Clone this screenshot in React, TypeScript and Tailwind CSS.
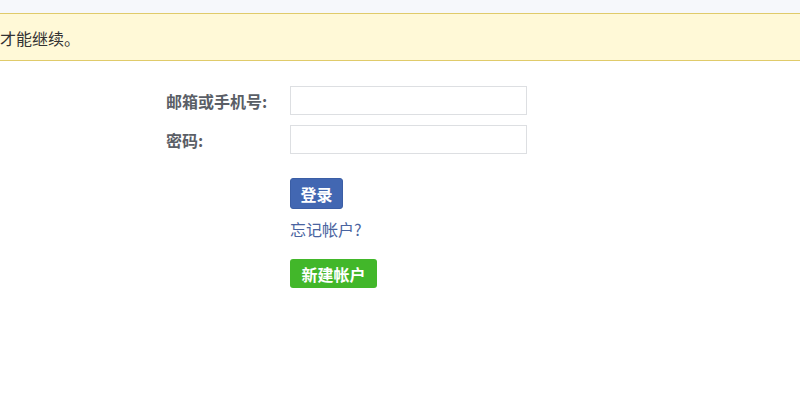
export default function App() {
  const font = { fontFamily: '"Noto Sans CJK SC", "Liberation Sans", sans-serif' }
  return (
    <div className="w-[800px] h-[401px] bg-white overflow-hidden" style={font}>
      {/* Top strip */}
      <div className="h-[13px] bg-[#f6f8fb]" />

      {/* Notice banner */}
      <div className="h-[48px] flex items-center bg-[#fff9d7] border-y border-[#e0cb6a]">
        <span className="text-[16px] text-[#333] leading-none pt-[2px]">才能继续。</span>
      </div>

      {/* Login form */}
      <div className="pl-[166px] pt-[25px]">
        <div className="flex items-center h-[29px]">
          <label className="w-[124px] text-[16px] font-bold text-[#5a5e66]">邮箱或手机号:</label>
          <input className="w-[237px] h-[29px] border border-[#dddfe2] bg-white outline-none" />
        </div>
        <div className="flex items-center h-[29px] mt-[10px]">
          <label className="w-[124px] text-[16px] font-bold text-[#5a5e66]">密码:</label>
          <input type="password" className="w-[237px] h-[29px] border border-[#dddfe2] bg-white outline-none" />
        </div>

        <div className="pl-[124px]">
          <button className="mt-[24px] w-[53px] h-[31px] rounded-[3px] bg-[#4267b2] border border-[#3b5ea5] text-white text-[16px] font-bold flex items-center justify-center">
            登录
          </button>
          <a className="block mt-[9px] text-[16px] text-[#4a64a0] leading-[22px]">忘记帐户?</a>
          <button className="mt-[19px] w-[87px] h-[29px] rounded-[3px] bg-[#42b72a] text-white text-[16px] font-bold flex items-center justify-center">
            新建帐户
          </button>
        </div>
      </div>
    </div>
  )
}
